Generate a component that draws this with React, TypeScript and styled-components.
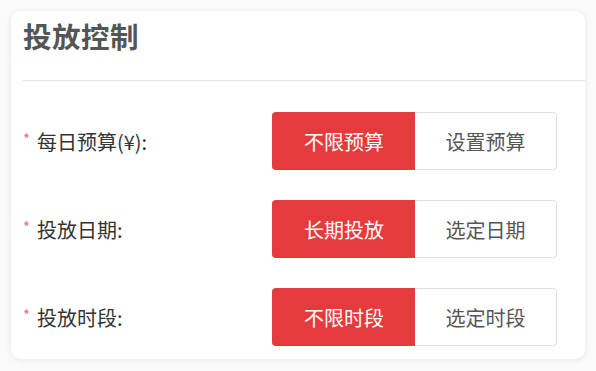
import React from "react";
import styled, { createGlobalStyle } from "styled-components";

const Global = createGlobalStyle`
  html, body { margin: 0; padding: 0; background: #fafafa; }
  body { font-family: "Noto Sans CJK SC", "Noto Sans", sans-serif; }
  * { box-sizing: border-box; }
`;

const Page = styled.div`
  padding: 11px 11px 12px 11px;
  width: 596px;
  height: 371px;
`;

const Card = styled.section`
  background: #fff;
  border-radius: 10px;
  box-shadow: 0 1px 6px rgba(0, 0, 0, 0.08);
  padding-left: 12px;
  height: 348px;
  display: flex;
  flex-direction: column;
`;

const Header = styled.header`
  height: 70px;
  border-bottom: 1px solid #e4e4e4;
  display: flex;
  align-items: flex-start;
`;

const Title = styled.h2`
  margin: 5px 0 0 0;
  font-size: 28.5px;
  line-height: 40px;
  font-weight: 700;
  color: #555;
  letter-spacing: 0.5px;
`;

const Body = styled.div`
  display: flex;
  flex-direction: column;
  gap: 30px;
  padding-top: 31px;
`;

const Row = styled.div`
  display: flex;
  align-items: center;
  height: 58px;
`;

const Label = styled.div`
  width: 249px;
  display: flex;
  align-items: center;
  font-size: 20px;
  color: #333;
`;

const Star = styled.span`
  color: #f56c6c;
  font-size: 15px;
  width: 14px;
  margin-top: -5px;
`;

const Group = styled.div`
  display: flex;
  height: 58px;
`;

const Option = styled.button<{ $active?: boolean; $first?: boolean }>`
  width: ${(p) => (p.$first ? "143px" : "142px")};
  height: 58px;
  font-family: inherit;
  font-size: 20px;
  cursor: pointer;
  background: ${(p) => (p.$active ? "#e63b3d" : "#fff")};
  color: ${(p) => (p.$active ? "#fff" : "#555")};
  border: 1px solid ${(p) => (p.$active ? "#e63b3d" : "#dfe1e8")};
  ${(p) => (p.$first ? "border-right: none;" : "border-left: none;")}
  border-radius: ${(p) => (p.$first ? "4px 0 0 4px" : "0 4px 4px 0")};
  padding: 0;
`;

const rows = [
  { label: "每日预算(¥):", a: "不限预算", b: "设置预算" },
  { label: "投放日期:", a: "长期投放", b: "选定日期" },
  { label: "投放时段:", a: "不限时段", b: "选定时段" },
];

export default function App() {
  return (
    <>
      <Global />
      <Page>
        <Card>
          <Header>
            <Title>投放控制</Title>
          </Header>
          <Body>
            {rows.map((r) => (
              <Row key={r.label}>
                <Label>
                  <Star>*</Star>
                  {r.label}
                </Label>
                <Group>
                  <Option $first $active>
                    {r.a}
                  </Option>
                  <Option>{r.b}</Option>
                </Group>
              </Row>
            ))}
          </Body>
        </Card>
      </Page>
    </>
  );
}
